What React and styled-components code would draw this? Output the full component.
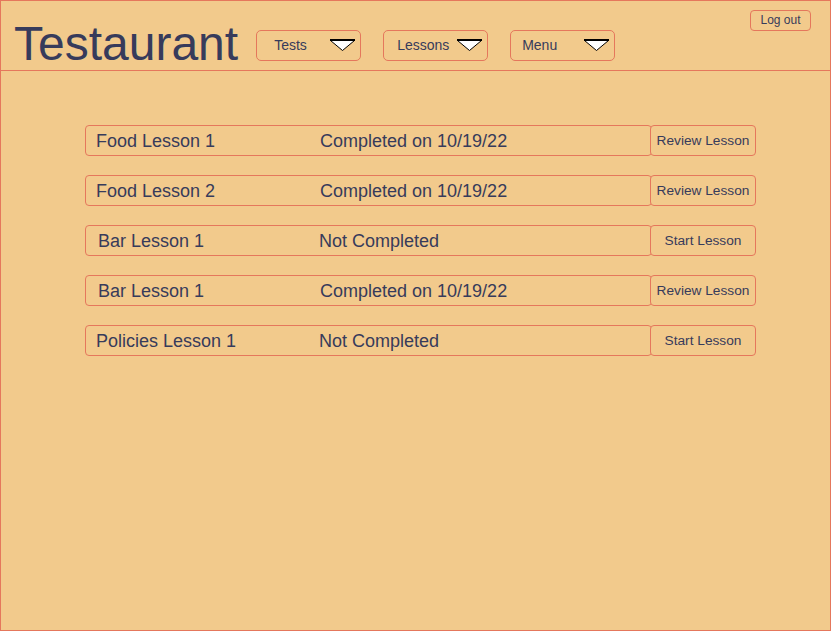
import React from 'react';
import styled, { createGlobalStyle } from 'styled-components';

const Global = createGlobalStyle`
  body {
    margin: 0;
    background: #f2ca8c;
    font-family: "Liberation Sans", Arial, sans-serif;
    color: #373b5b;
  }
`

const Frame = styled.div`
  width: 831px;
  height: 631px;
  box-sizing: border-box;
  border: 1px solid #e5775c;
  background: #f2ca8c;
`

const Header = styled.header`
  display: flex;
  align-items: flex-start;
  height: 69px;
  border-bottom: 1px solid #e5775c;
`

const Title = styled.h1`
  margin: 19px 0 0 13px;
  font-size: 48px;
  line-height: 48px;
  font-weight: normal;
`

const Nav = styled.nav`
  display: flex;
  gap: 22px;
  margin: 29px 0 0 18px;
`

const Dropdown = styled.div`
  display: flex;
  align-items: center;
  justify-content: space-between;
  width: 105px;
  height: 31px;
  box-sizing: border-box;
  border: 1px solid #e5775c;
  border-radius: 5px;
  padding: 0 4px 1px ${p => p.$indent}px;
  font-size: 14px;
`

const LogOut = styled.button`
  margin: 9px 19px 0 auto;
  width: 61px;
  height: 21px;
  box-sizing: border-box;
  border: 1px solid #e5775c;
  border-radius: 4px;
  background: transparent;
  font-family: inherit;
  font-size: 12px;
  color: inherit;
  padding: 0 0 1px;
`

const List = styled.main`
  display: flex;
  flex-direction: column;
  gap: 19px;
  padding: 54px 0 0 84px;
`

const Row = styled.div`
  display: flex;
  width: 671px;
  height: 31px;
`

const Lesson = styled.div`
  flex: 1;
  display: flex;
  align-items: center;
  box-sizing: border-box;
  border: 1px solid #e5775c;
  border-radius: 4px;
  padding: 2px 0 0 ${p => p.$pad}px;
  font-size: 18px;
`

const Name = styled.span`
  width: ${p => p.$w}px;
`

const Action = styled.button`
  width: 106px;
  margin-left: -2px;
  box-sizing: border-box;
  border: 1px solid #e5775c;
  border-radius: 4px;
  background: #f2ca8c;
  font-family: inherit;
  font-size: 13.7px;
  color: inherit;
  padding: 0;
`

const Caret = () => (
  <svg width="27" height="13" viewBox="0 0 27 13">
    <polygon points="1.5,1.5 25.5,1.5 13.5,11.5" fill="#fff" stroke="#000" strokeWidth="1" />
    <line x1="1" y1="1" x2="26" y2="1" stroke="#000" strokeWidth="2" />
  </svg>
)

const menus = [
  { label: 'Tests', indent: 17 },
  { label: 'Lessons', indent: 13 },
  { label: 'Menu', indent: 11 },
]

const lessons = [
  { name: 'Food Lesson 1', status: 'Completed on 10/19/22', done: true, pad: 10, w: 224 },
  { name: 'Food Lesson 2', status: 'Completed on 10/19/22', done: true, pad: 10, w: 224 },
  { name: 'Bar Lesson 1', status: 'Not Completed', done: false, pad: 12, w: 221 },
  { name: 'Bar Lesson 1', status: 'Completed on 10/19/22', done: true, pad: 12, w: 222 },
  { name: 'Policies Lesson 1', status: 'Not Completed', done: false, pad: 10, w: 223 },
]

export default function App() {
  return (
    <>
      <Global />
      <Frame>
        <Header>
          <Title>Testaurant</Title>
          <Nav>
            {menus.map(m => (
              <Dropdown key={m.label} $indent={m.indent}>
                <span>{m.label}</span>
                <Caret />
              </Dropdown>
            ))}
          </Nav>
          <LogOut>Log out</LogOut>
        </Header>
        <List>
          {lessons.map((l, i) => (
            <Row key={i}>
              <Lesson $pad={l.pad}>
                <Name $w={l.w}>{l.name}</Name>
                <span>{l.status}</span>
              </Lesson>
              <Action>{l.done ? 'Review Lesson' : 'Start Lesson'}</Action>
            </Row>
          ))}
        </List>
      </Frame>
    </>
  )
}
